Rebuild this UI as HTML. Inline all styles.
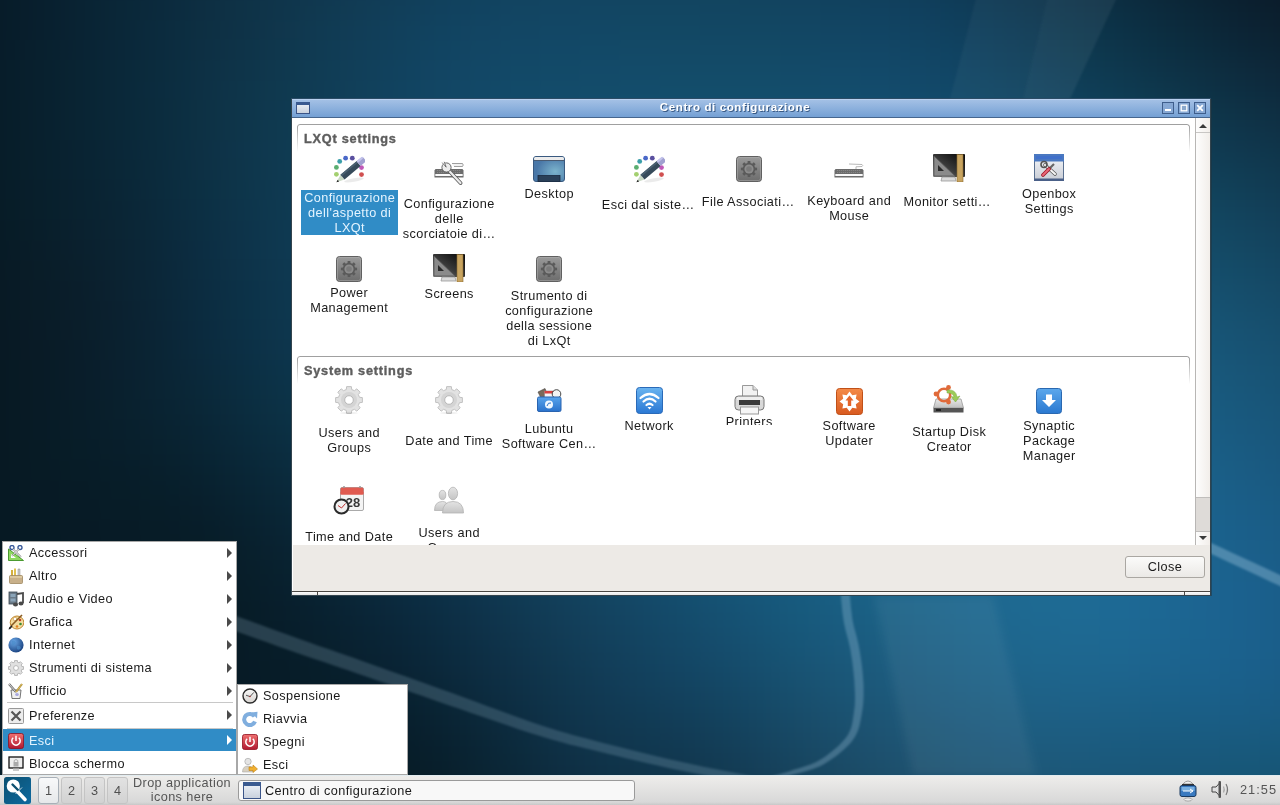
<!DOCTYPE html>
<html><head><meta charset="utf-8"><style>
html,body{margin:0;padding:0;width:1280px;height:805px;overflow:hidden;position:relative;font-family:"Liberation Sans", sans-serif}
</style></head><body><div style="position:absolute;left:0;top:0;width:1280px;height:805px;overflow:hidden;will-change:transform">
<div style="position:absolute;left:-40px;top:-40px;width:1360px;filter:blur(12px)"><div style="height:20px;background:linear-gradient(90deg,#061825 0px,#071b29 40px,#081e2d 80px,#092232 120px,#0a2537 160px,#0b293b 200px,#0d2c40 240px,#0e3044 280px,#0f3349 320px,#10364e 360px,#103952 400px,#113c57 440px,#113e5a 480px,#11405c 520px,#11415e 560px,#11425e 600px,#12425e 640px,#12425e 680px,#11425d 720px,#11425d 760px,#11415c 800px,#11405b 840px,#103e5a 880px,#103d59 920px,#0f3b57 960px,#0f3853 1000px,#0e354e 1040px,#0d3149 1080px,#0c2e43 1120px,#0b293c 1160px,#0b2536 1200px,#0b2030 1240px,#0a1c2b 1280px,#0a1927 1320px,#0a1624 1360px)"></div><div style="height:20px;background:linear-gradient(90deg,#061925 0px,#071b29 40px,#081f2d 80px,#092232 120px,#0a2637 160px,#0b2a3c 200px,#0d2d41 240px,#0e3145 280px,#0f344a 320px,#10374f 360px,#113b54 400px,#113d58 440px,#11405c 480px,#11425f 520px,#124360 560px,#124461 600px,#124461 640px,#124460 680px,#124460 720px,#12445f 760px,#12435e 800px,#11425e 840px,#11415d 880px,#103f5c 920px,#103d5a 960px,#0f3b56 1000px,#0e3852 1040px,#0d344c 1080px,#0c3046 1120px,#0c2c40 1160px,#0b2839 1200px,#0b2333 1240px,#0b1f2e 1280px,#0b1b2a 1320px,#0b1927 1360px)"></div><div style="height:20px;background:linear-gradient(90deg,#061925 0px,#071c29 40px,#081f2e 80px,#092333 120px,#0a2738 160px,#0b2a3d 200px,#0d2e42 240px,#0e3246 280px,#0f354b 320px,#103950 360px,#113c55 400px,#113f5a 440px,#11415e 480px,#114361 520px,#124562 560px,#124563 600px,#124663 640px,#124662 680px,#124662 720px,#124561 760px,#124561 800px,#124461 840px,#114360 880px,#114260 920px,#10405e 960px,#0f3d5a 1000px,#0f3a55 1040px,#0e374f 1080px,#0d3349 1120px,#0c2f43 1160px,#0c2a3d 1200px,#0b2637 1240px,#0b2131 1280px,#0b1e2d 1320px,#0b1b2a 1360px)"></div><div style="height:20px;background:linear-gradient(90deg,#061925 0px,#071c29 40px,#081f2e 80px,#092333 120px,#0a2738 160px,#0b2b3e 200px,#0d2f42 240px,#0e3247 280px,#10364c 320px,#103a52 360px,#113d57 400px,#11405c 440px,#114360 480px,#124563 520px,#124664 560px,#124765 600px,#124765 640px,#124864 680px,#124864 720px,#124764 760px,#124763 800px,#124663 840px,#124563 880px,#114463 920px,#114261 960px,#10405d 1000px,#0f3d59 1040px,#0e3953 1080px,#0d364d 1120px,#0c3247 1160px,#0c2d40 1200px,#0c293a 1240px,#0c2435 1280px,#0c2130 1320px,#0c1e2d 1360px)"></div><div style="height:20px;background:linear-gradient(90deg,#061925 0px,#071c2a 40px,#08202e 80px,#092333 120px,#0a2739 160px,#0b2b3e 200px,#0d2f43 240px,#0e3348 280px,#0f374d 320px,#103b53 360px,#113e58 400px,#11415d 440px,#114462 480px,#124664 520px,#124766 560px,#124867 600px,#124967 640px,#134967 680px,#134966 720px,#134966 760px,#134966 800px,#124866 840px,#124766 880px,#124666 920px,#114564 960px,#104261 1000px,#103f5c 1040px,#0f3c56 1080px,#0e3950 1120px,#0d354a 1160px,#0c3044 1200px,#0c2c3e 1240px,#0c2739 1280px,#0c2434 1320px,#0c2131 1360px)"></div><div style="height:20px;background:linear-gradient(90deg,#061a25 0px,#071d2a 40px,#08202e 80px,#092433 120px,#0a2839 160px,#0b2c3e 200px,#0d3044 240px,#0e3449 280px,#0f384e 320px,#103c54 360px,#113f59 400px,#11425f 440px,#124563 480px,#124766 520px,#124967 560px,#124a68 600px,#134a69 640px,#134b69 680px,#134b68 720px,#134b68 760px,#134b68 800px,#134a68 840px,#134a69 880px,#124969 920px,#124767 960px,#114564 1000px,#10425f 1040px,#0f3f5a 1080px,#0e3c54 1120px,#0e384e 1160px,#0d3348 1200px,#0d2f42 1240px,#0d2b3d 1280px,#0d2739 1320px,#0d2435 1360px)"></div><div style="height:20px;background:linear-gradient(90deg,#061a25 0px,#071d2a 40px,#08202e 80px,#092433 120px,#0a2839 160px,#0b2c3f 200px,#0d3044 240px,#0e354a 280px,#0f394f 320px,#103c55 360px,#11405a 400px,#114360 440px,#124664 480px,#124867 520px,#124a69 560px,#134b6a 600px,#134c6a 640px,#134c6b 680px,#134d6b 720px,#134d6b 760px,#134d6b 800px,#134c6b 840px,#134c6c 880px,#134b6c 920px,#12496a 960px,#114767 1000px,#114563 1040px,#10425d 1080px,#0f3e58 1120px,#0e3b52 1160px,#0e374c 1200px,#0d3246 1240px,#0d2e41 1280px,#0d2a3d 1320px,#0d2739 1360px)"></div><div style="height:20px;background:linear-gradient(90deg,#061a25 0px,#071d29 40px,#08202e 80px,#092433 120px,#0a2839 160px,#0b2c3e 200px,#0d3144 240px,#0e354a 280px,#0f3950 320px,#103d56 360px,#11405b 400px,#114460 440px,#124765 480px,#124968 520px,#124b6a 560px,#134c6b 600px,#134d6c 640px,#134e6d 680px,#134e6d 720px,#144e6d 760px,#144e6d 800px,#134e6e 840px,#134e6e 880px,#134d6e 920px,#134c6d 960px,#124a6a 1000px,#114766 1040px,#104461 1080px,#10415c 1120px,#0f3e56 1160px,#0e3a50 1200px,#0e364b 1240px,#0e3246 1280px,#0e2e41 1320px,#0e2b3d 1360px)"></div><div style="height:20px;background:linear-gradient(90deg,#061a25 0px,#071d29 40px,#08202e 80px,#092433 120px,#0a2838 160px,#0b2c3e 200px,#0d3144 240px,#0e354a 280px,#0f3a50 320px,#103d56 360px,#11415c 400px,#114461 440px,#124765 480px,#124969 520px,#134b6b 560px,#134d6c 600px,#134e6e 640px,#144f6e 680px,#14506f 720px,#14506f 760px,#145070 800px,#145070 840px,#145071 880px,#134f71 920px,#134e6f 960px,#124c6d 1000px,#124a69 1040px,#114764 1080px,#10445f 1120px,#10415a 1160px,#0f3d54 1200px,#0f394f 1240px,#0f354a 1280px,#0f3146 1320px,#0f2e42 1360px)"></div><div style="height:20px;background:linear-gradient(90deg,#061a25 0px,#071d29 40px,#08202d 80px,#092332 120px,#0a2738 160px,#0b2c3e 200px,#0d3044 240px,#0e354b 280px,#0f3a51 320px,#103e57 360px,#11415c 400px,#114561 440px,#124866 480px,#124a69 520px,#134c6c 560px,#134e6e 600px,#134f6f 640px,#145070 680px,#145171 720px,#145272 760px,#145272 800px,#145273 840px,#145273 880px,#145173 920px,#135072 960px,#134e6f 1000px,#124c6c 1040px,#124a68 1080px,#114763 1120px,#11445e 1160px,#104059 1200px,#103c53 1240px,#10384f 1280px,#0f354a 1320px,#0f3146 1360px)"></div><div style="height:20px;background:linear-gradient(90deg,#061a25 0px,#071d28 40px,#08202d 80px,#092332 120px,#0a2737 160px,#0b2b3d 200px,#0d3044 240px,#0e354a 280px,#0f3a51 320px,#103e57 360px,#10415c 400px,#114562 440px,#124866 480px,#124a6a 520px,#134d6c 560px,#134e6f 600px,#145070 640px,#145172 680px,#145273 720px,#145374 760px,#145474 800px,#145475 840px,#145476 880px,#145375 920px,#145274 960px,#135172 1000px,#134f6f 1040px,#124c6b 1080px,#124a67 1120px,#114662 1160px,#11435d 1200px,#113f58 1240px,#103c53 1280px,#10384e 1320px,#10344a 1360px)"></div><div style="height:20px;background:linear-gradient(90deg,#061a24 0px,#071c28 40px,#081f2c 80px,#092231 120px,#0a2636 160px,#0b2b3d 200px,#0c3043 240px,#0d354a 280px,#0f3951 320px,#0f3d57 360px,#10415c 400px,#114562 440px,#124866 480px,#124b6a 520px,#134d6d 560px,#134f6f 600px,#145171 640px,#145273 680px,#145374 720px,#155475 760px,#155577 800px,#155577 840px,#155578 880px,#155578 920px,#145477 960px,#145375 1000px,#145172 1040px,#134f6e 1080px,#134c6a 1120px,#124965 1160px,#124661 1200px,#11435c 1240px,#113f57 1280px,#113b53 1320px,#11384e 1360px)"></div><div style="height:20px;background:linear-gradient(90deg,#061924 0px,#071c27 40px,#081f2b 80px,#092230 120px,#0a2535 160px,#0b2a3c 200px,#0c2f43 240px,#0d344a 280px,#0e3950 320px,#0f3d57 360px,#10415c 400px,#114562 440px,#124866 480px,#124b6a 520px,#134d6d 560px,#135070 600px,#145172 640px,#145374 680px,#155476 720px,#155677 760px,#155678 800px,#15577a 840px,#15577a 880px,#15577a 920px,#155679 960px,#155578 1000px,#145475 1040px,#145172 1080px,#134f6e 1120px,#134c69 1160px,#134965 1200px,#124660 1240px,#12425b 1280px,#123e57 1320px,#113b52 1360px)"></div><div style="height:20px;background:linear-gradient(90deg,#061923 0px,#071b26 40px,#081e2a 80px,#0a212f 120px,#0b2534 160px,#0b293b 200px,#0c2e42 240px,#0d3349 280px,#0e3850 320px,#0f3d56 360px,#10415c 400px,#114561 440px,#114866 480px,#124b6a 520px,#134e6d 560px,#135070 600px,#145273 640px,#145475 680px,#155577 720px,#155779 760px,#15587a 800px,#15587b 840px,#16597c 880px,#15597c 920px,#15587c 960px,#15577a 1000px,#155678 1040px,#145475 1080px,#145271 1120px,#144f6d 1160px,#134c69 1200px,#134964 1240px,#134560 1280px,#13415b 1320px,#123e56 1360px)"></div><div style="height:20px;background:linear-gradient(90deg,#071923 0px,#071b26 40px,#091d29 80px,#0a202e 120px,#0b2433 160px,#0b283a 200px,#0c2d42 240px,#0d3349 280px,#0e3850 320px,#0f3c56 360px,#10415c 400px,#114461 440px,#114866 480px,#124b6a 520px,#134e6d 560px,#135071 600px,#145274 640px,#145476 680px,#155678 720px,#15587a 760px,#16597c 800px,#165a7d 840px,#165a7e 880px,#165a7e 920px,#165a7e 960px,#16597d 1000px,#15587b 1040px,#155678 1080px,#155474 1120px,#155170 1160px,#144f6c 1200px,#144b68 1240px,#144863 1280px,#13445f 1320px,#13405a 1360px)"></div><div style="height:20px;background:linear-gradient(90deg,#071922 0px,#081a25 40px,#091d28 80px,#0a1f2c 120px,#0b2332 160px,#0b2739 200px,#0c2d41 240px,#0d3248 280px,#0e374f 320px,#0f3c55 360px,#10405b 400px,#104460 440px,#114765 480px,#124b69 520px,#134e6d 560px,#135071 600px,#145374 640px,#155577 680px,#155779 720px,#15597b 760px,#165a7d 800px,#165b7f 840px,#165c80 880px,#165c80 920px,#165c80 960px,#165b7f 1000px,#165a7d 1040px,#16587b 1080px,#165678 1120px,#155474 1160px,#155170 1200px,#154e6c 1240px,#144b67 1280px,#144763 1320px,#14435e 1360px)"></div><div style="height:20px;background:linear-gradient(90deg,#071822 0px,#081a25 40px,#091c28 80px,#0a1e2b 120px,#0b2231 160px,#0b2738 200px,#0c2c40 240px,#0c3147 280px,#0d364e 320px,#0e3b54 360px,#0f3f5a 400px,#104360 440px,#114764 480px,#124a69 520px,#134d6d 560px,#145071 600px,#145374 640px,#155577 680px,#15577a 720px,#16597d 760px,#165b7f 800px,#165c80 840px,#175d82 880px,#175e82 920px,#175e82 960px,#175d82 1000px,#175c80 1040px,#165b7e 1080px,#16597b 1120px,#165677 1160px,#165373 1200px,#16506f 1240px,#154d6b 1280px,#154966 1320px,#144662 1360px)"></div><div style="height:20px;background:linear-gradient(90deg,#071822 0px,#081a24 40px,#091c27 80px,#0a1e2b 120px,#0b2130 160px,#0b2637 200px,#0b2b3f 240px,#0c3146 280px,#0d364d 320px,#0e3a53 360px,#0f3f59 400px,#10435f 440px,#114664 480px,#124a68 520px,#134d6d 560px,#145071 600px,#145374 640px,#155578 680px,#15587b 720px,#165a7d 760px,#165c80 800px,#175d82 840px,#175e83 880px,#175f84 920px,#175f84 960px,#175f84 1000px,#175e82 1040px,#175d80 1080px,#175b7e 1120px,#17587a 1160px,#175677 1200px,#165373 1240px,#164f6e 1280px,#154c6a 1320px,#154865 1360px)"></div><div style="height:20px;background:linear-gradient(90deg,#071821 0px,#081924 40px,#091b27 80px,#0a1e2a 120px,#0a2130 160px,#0b2536 200px,#0b2a3e 240px,#0c3045 280px,#0d354c 320px,#0e3a52 360px,#0f3e58 400px,#10425d 440px,#114663 480px,#124967 520px,#134c6c 560px,#145070 600px,#145374 640px,#155678 680px,#15587b 720px,#165a7e 760px,#165c81 800px,#175e83 840px,#175f85 880px,#176086 920px,#186186 960px,#186086 1000px,#186085 1040px,#185f83 1080px,#185d80 1120px,#175b7d 1160px,#17587a 1200px,#175576 1240px,#175272 1280px,#164e6d 1320px,#154a68 1360px)"></div><div style="height:20px;background:linear-gradient(90deg,#071821 0px,#081924 40px,#091b26 80px,#091d2a 120px,#0a212f 160px,#0a2535 200px,#0b2a3d 240px,#0c2f44 280px,#0d344b 320px,#0e3951 360px,#0f3d57 400px,#10415c 440px,#114561 480px,#124866 520px,#134c6b 560px,#144f70 600px,#145274 640px,#155578 680px,#16587b 720px,#165b7f 760px,#175d82 800px,#175f84 840px,#176086 880px,#186187 920px,#186288 960px,#186288 1000px,#186187 1040px,#186086 1080px,#185f83 1120px,#185c80 1160px,#185a7d 1200px,#175779 1240px,#175375 1280px,#175070 1320px,#164c6c 1360px)"></div><div style="height:20px;background:linear-gradient(90deg,#071821 0px,#071923 40px,#081b26 80px,#091d2a 120px,#0a202f 160px,#0a2434 200px,#0b293b 240px,#0b2e42 280px,#0c3349 320px,#0d384f 360px,#0e3c55 400px,#10405b 440px,#114460 480px,#124765 520px,#134b6a 560px,#134f6f 600px,#145273 640px,#155578 680px,#16587c 720px,#165b7f 760px,#175d82 800px,#176085 840px,#186187 880px,#186289 920px,#18638a 960px,#19638a 1000px,#196389 1040px,#196288 1080px,#196086 1120px,#195e83 1160px,#185c80 1200px,#18597c 1240px,#185577 1280px,#175273 1320px,#164e6f 1360px)"></div><div style="height:20px;background:linear-gradient(90deg,#071821 0px,#071923 40px,#081b26 80px,#091d2a 120px,#09202e 160px,#0a2433 200px,#0a2839 240px,#0b2d40 280px,#0c3247 320px,#0d364d 360px,#0e3a53 400px,#0f3e59 440px,#10425e 480px,#114664 520px,#134a69 560px,#134e6e 600px,#145173 640px,#155577 680px,#16587b 720px,#165b7f 760px,#175e83 800px,#176086 840px,#186288 880px,#18638a 920px,#19648b 960px,#19658b 1000px,#19648b 1040px,#19648a 1080px,#196288 1120px,#196086 1160px,#195d82 1200px,#195a7e 1240px,#18577a 1280px,#175376 1320px,#174f71 1360px)"></div><div style="height:20px;background:linear-gradient(90deg,#071821 0px,#071923 40px,#081b26 80px,#081d29 120px,#09202d 160px,#092332 200px,#0a2737 240px,#0b2c3e 280px,#0c3145 320px,#0d354b 360px,#0e3951 400px,#0f3d57 440px,#10415d 480px,#114562 520px,#124968 560px,#134d6d 600px,#145172 640px,#155477 680px,#16587b 720px,#165b7f 760px,#175e83 800px,#186086 840px,#186289 880px,#19648b 920px,#19658c 960px,#1a668d 1000px,#1a668d 1040px,#1a658c 1080px,#1a648a 1120px,#1a6288 1160px,#195f85 1200px,#195c81 1240px,#18587d 1280px,#185578 1320px,#175174 1360px)"></div><div style="height:20px;background:linear-gradient(90deg,#061821 0px,#071923 40px,#071b26 80px,#081d29 120px,#081f2c 160px,#092230 200px,#092535 240px,#0a2a3c 280px,#0b2f42 320px,#0c3349 360px,#0e374f 400px,#0f3b55 440px,#103f5b 480px,#114460 520px,#124866 560px,#134c6c 600px,#145071 640px,#155476 680px,#16577b 720px,#165b7f 760px,#175e83 800px,#186186 840px,#186389 880px,#19658c 920px,#1a668d 960px,#1a678e 1000px,#1a678f 1040px,#1b668e 1080px,#1b658d 1120px,#1a638a 1160px,#1a6087 1200px,#195d83 1240px,#19597f 1280px,#18567b 1320px,#185276 1360px)"></div><div style="height:20px;background:linear-gradient(90deg,#061821 0px,#071923 40px,#071b25 80px,#071d28 120px,#081e2b 160px,#08212e 200px,#092433 240px,#0a2839 280px,#0b2d3f 320px,#0c3146 360px,#0d354c 400px,#0e3952 440px,#103e58 480px,#11425f 520px,#124764 560px,#134b6a 600px,#144f70 640px,#155375 680px,#16577a 720px,#165a7e 760px,#175e83 800px,#186186 840px,#196389 880px,#19658c 920px,#1a678e 960px,#1b688f 1000px,#1b6890 1040px,#1b6890 1080px,#1b668f 1120px,#1b648c 1160px,#1a6289 1200px,#1a5e86 1240px,#195b81 1280px,#19577d 1320px,#185479 1360px)"></div><div style="height:20px;background:linear-gradient(90deg,#061821 0px,#071923 40px,#071b25 80px,#071c27 120px,#071d29 160px,#081f2c 200px,#082230 240px,#092636 280px,#0a2a3c 320px,#0c2f43 360px,#0d3349 400px,#0e3850 440px,#0f3c56 480px,#11415c 520px,#124563 560px,#134a69 600px,#144e6e 640px,#155274 680px,#165679 720px,#165a7e 760px,#175d82 800px,#186086 840px,#196389 880px,#1a658c 920px,#1a678f 960px,#1b6890 1000px,#1b6991 1040px,#1c6991 1080px,#1b6890 1120px,#1b668e 1160px,#1b638c 1200px,#1a6088 1240px,#1a5c84 1280px,#19587f 1320px,#18557b 1360px)"></div><div style="height:20px;background:linear-gradient(90deg,#061822 0px,#061923 40px,#071a25 80px,#071b26 120px,#071d28 160px,#071e2a 200px,#08202d 240px,#092433 280px,#0a2839 320px,#0b2d40 360px,#0c3146 400px,#0e364d 440px,#0f3a54 480px,#113f5a 520px,#124461 560px,#134867 600px,#144d6d 640px,#155172 680px,#165578 720px,#16597d 760px,#175d82 800px,#186086 840px,#196389 880px,#1a658c 920px,#1b678f 960px,#1b6991 1000px,#1c6992 1040px,#1c6992 1080px,#1c6992 1120px,#1c6790 1160px,#1b648d 1200px,#1b618a 1240px,#1a5d86 1280px,#195a82 1320px,#18567d 1360px)"></div><div style="height:20px;background:linear-gradient(90deg,#061822 0px,#061923 40px,#061a24 80px,#071b26 120px,#071c27 160px,#071d28 200px,#081e2b 240px,#082230 280px,#092636 320px,#0b2a3d 360px,#0c2f44 400px,#0d344a 440px,#0f3851 480px,#103d58 520px,#12425e 560px,#134765 600px,#144b6b 640px,#155071 680px,#155476 720px,#16587c 760px,#175c81 800px,#186085 840px,#196389 880px,#1a658c 920px,#1b678f 960px,#1c6991 1000px,#1c6a93 1040px,#1c6a93 1080px,#1c6a93 1120px,#1c6892 1160px,#1c658f 1200px,#1b628c 1240px,#1a5e88 1280px,#195b84 1320px,#19577f 1360px)"></div><div style="height:20px;background:linear-gradient(90deg,#061822 0px,#061923 40px,#061a24 80px,#071a25 120px,#071b26 160px,#071c27 200px,#071d29 240px,#08202d 280px,#092433 320px,#0a283a 360px,#0b2d41 400px,#0d3248 440px,#0e364f 480px,#103b56 520px,#12405c 560px,#134563 600px,#144a69 640px,#154e6f 680px,#155375 720px,#16577a 760px,#175b7f 800px,#185f84 840px,#196288 880px,#1a658b 920px,#1b678e 960px,#1c6991 1000px,#1d6a93 1040px,#1d6b94 1080px,#1d6a94 1120px,#1c6993 1160px,#1c6691 1200px,#1b638e 1240px,#1a5f8a 1280px,#1a5c86 1320px,#195881 1360px)"></div><div style="height:20px;background:linear-gradient(90deg,#061922 0px,#061923 40px,#061a24 80px,#061a24 120px,#071a25 160px,#071b26 200px,#071c27 240px,#081f2b 280px,#092231 320px,#0a2637 360px,#0b2b3e 400px,#0c2f45 440px,#0e344c 480px,#103953 520px,#113e5a 560px,#134360 600px,#144867 640px,#144d6d 680px,#155173 720px,#165679 760px,#175a7e 800px,#185e83 840px,#196187 880px,#1a648a 920px,#1c678e 960px,#1c6990 1000px,#1d6a93 1040px,#1d6b94 1080px,#1d6b95 1120px,#1d6994 1160px,#1c6792 1200px,#1b648f 1240px,#1b608b 1280px,#1a5d87 1320px,#195983 1360px)"></div><div style="height:20px;background:linear-gradient(90deg,#061923 0px,#061923 40px,#061a24 80px,#061a24 120px,#071a24 160px,#071a25 200px,#071b26 240px,#081e2a 280px,#08212e 320px,#092534 360px,#0a293b 400px,#0c2d42 440px,#0d324a 480px,#0f3751 520px,#113c57 560px,#13425e 600px,#144664 640px,#144b6b 680px,#155071 720px,#165477 760px,#16597c 800px,#185d81 840px,#196085 880px,#1b6389 920px,#1c668d 960px,#1d6890 1000px,#1d6a92 1040px,#1e6b94 1080px,#1d6b95 1120px,#1d6a94 1160px,#1c6793 1200px,#1c6490 1240px,#1b618d 1280px,#1a5d89 1320px,#195a84 1360px)"></div><div style="height:20px;background:linear-gradient(90deg,#061923 0px,#061a24 40px,#061a24 80px,#061a24 120px,#061a24 160px,#071a25 200px,#071b26 240px,#071d28 280px,#081f2d 320px,#092332 360px,#0a2739 400px,#0b2b40 440px,#0d3047 480px,#0f354e 520px,#113b55 560px,#12405b 600px,#134562 640px,#144968 680px,#154e6f 720px,#155375 760px,#16577a 800px,#185b7f 840px,#195f83 880px,#1b6288 920px,#1c658b 960px,#1d678e 1000px,#1e6991 1040px,#1e6a93 1080px,#1e6b95 1120px,#1d6a94 1160px,#1c6793 1200px,#1c6491 1240px,#1b618e 1280px,#1a5e8a 1320px,#195b85 1360px)"></div><div style="height:20px;background:linear-gradient(90deg,#061923 0px,#061a24 40px,#061a24 80px,#061a25 120px,#071a25 160px,#071a25 200px,#071b25 240px,#071c27 280px,#081e2b 320px,#082130 360px,#0a2536 400px,#0b293d 440px,#0c2e44 480px,#0e334b 520px,#103952 560px,#123e59 600px,#13435f 640px,#144766 680px,#144c6c 720px,#155172 760px,#165578 800px,#175a7d 840px,#195d81 880px,#1b6185 920px,#1c6489 960px,#1d668d 1000px,#1e6890 1040px,#1e6a92 1080px,#1e6a94 1120px,#1d6994 1160px,#1c6793 1200px,#1c6491 1240px,#1b618e 1280px,#1a5e8a 1320px,#195b85 1360px)"></div><div style="height:20px;background:linear-gradient(90deg,#061a24 0px,#061a25 40px,#071a25 80px,#071a25 120px,#071a25 160px,#071a25 200px,#071b25 240px,#071c27 280px,#071d2a 320px,#08202e 360px,#092334 400px,#0a273a 440px,#0c2c41 480px,#0e3148 520px,#10374f 560px,#123c56 600px,#13415d 640px,#134563 680px,#144a69 720px,#154e6f 760px,#165375 800px,#17587a 840px,#195b7f 880px,#1b5f83 920px,#1d6287 960px,#1e658b 1000px,#1e678e 1040px,#1e6891 1080px,#1e6992 1120px,#1d6893 1160px,#1c6692 1200px,#1b6490 1240px,#1b618e 1280px,#1a5e8a 1320px,#195b86 1360px)"></div><div style="height:20px;background:linear-gradient(90deg,#061a25 0px,#071b25 40px,#071b26 80px,#071b26 120px,#071b25 160px,#071b25 200px,#071b25 240px,#071b26 280px,#071d29 320px,#081f2c 360px,#092231 400px,#0a2537 440px,#0b2a3e 480px,#0d2f45 520px,#0f344c 560px,#113a53 600px,#123f5a 640px,#134360 680px,#144766 720px,#154c6c 760px,#165171 800px,#175577 840px,#1a597c 880px,#1c5d80 920px,#1d6085 960px,#1e6388 1000px,#1e658c 1040px,#1e678e 1080px,#1e6790 1120px,#1d6790 1160px,#1c6590 1200px,#1b638f 1240px,#1b618d 1280px,#1a5e8a 1320px,#195b85 1360px)"></div><div style="height:20px;background:linear-gradient(90deg,#071b25 0px,#071b26 40px,#071b26 80px,#071b26 120px,#071b26 160px,#071b26 200px,#071b26 240px,#071b26 280px,#071c28 320px,#071e2a 360px,#08202f 400px,#092334 440px,#0b283b 480px,#0d2d42 520px,#0f3249 560px,#103850 600px,#123c57 640px,#12415d 680px,#134563 720px,#144968 760px,#164e6e 800px,#185373 840px,#1a5778 880px,#1c5b7d 920px,#1d5e82 960px,#1e6186 1000px,#1e6389 1040px,#1e658c 1080px,#1d658d 1120px,#1d658e 1160px,#1c638d 1200px,#1b628d 1240px,#1a608c 1280px,#1a5d88 1320px,#195b84 1360px)"></div><div style="height:20px;background:linear-gradient(90deg,#071b26 0px,#071b27 40px,#071c27 80px,#071c27 120px,#071c27 160px,#071b26 200px,#071b26 240px,#071b26 280px,#071b27 320px,#071d29 360px,#081f2c 400px,#092231 440px,#0a2637 480px,#0c2b3f 520px,#0e3046 560px,#10364d 600px,#113a54 640px,#123e5a 680px,#13425f 720px,#144664 760px,#154b6a 800px,#18506f 840px,#1a5475 880px,#1c587a 920px,#1e5c7e 960px,#1e5f83 1000px,#1e6186 1040px,#1e6288 1080px,#1d638a 1120px,#1c628a 1160px,#1b618a 1200px,#1a608a 1240px,#1a5f89 1280px,#195c86 1320px,#185a82 1360px)"></div><div style="height:20px;background:linear-gradient(90deg,#071b26 0px,#071c27 40px,#071c28 80px,#071c28 120px,#071c28 160px,#071c27 200px,#071b26 240px,#071b26 280px,#071b26 320px,#071c27 360px,#071d2a 400px,#08202e 440px,#092434 480px,#0b293b 520px,#0d2e43 560px,#0f344b 600px,#113851 640px,#113c56 680px,#123f5a 720px,#13435f 760px,#154865 800px,#184d6b 840px,#1a5271 880px,#1c5676 920px,#1e5a7b 960px,#1e5c7f 1000px,#1e5f82 1040px,#1e6085 1080px,#1d6086 1120px,#1c6086 1160px,#1a5f86 1200px,#1a5e86 1240px,#195d86 1280px,#195b83 1320px,#185980 1360px)"></div><div style="height:20px;background:linear-gradient(90deg,#071c27 0px,#071c28 40px,#071d28 80px,#071d29 120px,#071d29 160px,#071c28 200px,#071c27 240px,#071b26 280px,#071b25 320px,#071b26 360px,#071c28 400px,#081e2b 440px,#092231 480px,#0b2738 520px,#0d2c40 560px,#0f3248 600px,#10364e 640px,#113952 680px,#123c56 720px,#13405b 760px,#154561 800px,#184a67 840px,#1a4f6d 880px,#1d5373 920px,#1e5777 960px,#1e5a7b 1000px,#1e5c7f 1040px,#1d5d81 1080px,#1c5d82 1120px,#1b5d82 1160px,#1a5c82 1200px,#195c82 1240px,#195b81 1280px,#185a7f 1320px,#18587d 1360px)"></div><div style="height:20px;background:linear-gradient(90deg,#071c28 0px,#071d28 40px,#071d29 80px,#071d29 120px,#071d29 160px,#071d29 200px,#071c27 240px,#071b26 280px,#061a25 320px,#061a25 360px,#071b26 400px,#071d29 440px,#08202e 480px,#0a2535 520px,#0c2b3d 560px,#0e3045 600px,#10344b 640px,#10374f 680px,#113952 720px,#133d56 760px,#15425d 800px,#174763 840px,#1a4c69 880px,#1d516f 920px,#1e5574 960px,#1e5778 1000px,#1e597b 1040px,#1d5b7d 1080px,#1c5b7e 1120px,#1a5a7e 1160px,#19597d 1200px,#19597d 1240px,#18597c 1280px,#17587b 1320px,#175679 1360px)"></div><div style="height:20px;background:linear-gradient(90deg,#071d28 0px,#071d29 40px,#081e2a 80px,#081e2a 120px,#081e2a 160px,#071d29 200px,#071c27 240px,#071b25 280px,#061a24 320px,#061a24 360px,#061a25 400px,#071c27 440px,#081f2b 480px,#0a2433 520px,#0c293a 560px,#0e2e42 600px,#0f3248 640px,#10354b 680px,#11374e 720px,#123a52 760px,#153f59 800px,#17455f 840px,#1a4a65 880px,#1c4e6b 920px,#1e5270 960px,#1e5574 1000px,#1e5777 1040px,#1d5879 1080px,#1b587a 1120px,#1a587a 1160px,#195779 1200px,#185779 1240px,#175778 1280px,#175677 1320px,#175576 1360px)"></div><div style="height:20px;background:linear-gradient(90deg,#071d28 0px,#071d29 40px,#081e2a 80px,#081e2a 120px,#081e2a 160px,#071d29 200px,#071c27 240px,#071b25 280px,#061a24 320px,#061923 360px,#061a24 400px,#071b25 440px,#081e2a 480px,#0a2230 520px,#0c2738 560px,#0d2c3f 600px,#0f3044 640px,#103348 680px,#11354b 720px,#12384f 760px,#143d55 800px,#17425b 840px,#1a4762 880px,#1c4c67 920px,#1d4f6c 960px,#1e5270 1000px,#1d5473 1040px,#1c5575 1080px,#1b5676 1120px,#1a5576 1160px,#185575 1200px,#185575 1240px,#175574 1280px,#175473 1320px,#165373 1360px)"></div><div style="height:20px;background:linear-gradient(90deg,#071d28 0px,#071e29 40px,#081e2a 80px,#081e2a 120px,#081e2a 160px,#071d29 200px,#071c27 240px,#071b25 280px,#061a23 320px,#061923 360px,#061923 400px,#071b25 440px,#081d29 480px,#09212e 520px,#0b2635 560px,#0d2a3c 600px,#0e2e41 640px,#0f3145 680px,#103348 720px,#12374c 760px,#143b52 800px,#174058 840px,#19455e 880px,#1c4963 920px,#1d4d68 960px,#1d506c 1000px,#1d526f 1040px,#1c5371 1080px,#1b5372 1120px,#195372 1160px,#185372 1200px,#175371 1240px,#175371 1280px,#165370 1320px,#165270 1360px)"></div><div style="height:20px;background:linear-gradient(90deg,#071d28 0px,#081e29 40px,#081e2a 80px,#081e2a 120px,#081e2a 160px,#071d29 200px,#071c27 240px,#071b25 280px,#061a23 320px,#061922 360px,#061922 400px,#071a24 440px,#081d28 480px,#09202d 520px,#0b2533 560px,#0d2939 600px,#0e2c3e 640px,#0f2f42 680px,#103245 720px,#12354a 760px,#14394f 800px,#173e55 840px,#19435b 880px,#1b4760 920px,#1c4a64 960px,#1c4d68 1000px,#1c4f6b 1040px,#1b506d 1080px,#1a516e 1120px,#19516e 1160px,#18516e 1200px,#17516e 1240px,#16516d 1280px,#16516d 1320px,#16506d 1360px)"></div><div style="height:20px;background:linear-gradient(90deg,#071d28 0px,#081e29 40px,#081e2a 80px,#081e2a 120px,#081e29 160px,#071d28 200px,#071c26 240px,#071b24 280px,#061a23 320px,#061922 360px,#061922 400px,#071a23 440px,#081c27 480px,#09202b 520px,#0b2331 560px,#0c2736 600px,#0e2b3b 640px,#0f2d3f 680px,#103043 720px,#123447 760px,#14384c 800px,#163c52 840px,#194057 880px,#1a445c 920px,#1b4861 960px,#1c4b65 1000px,#1c4d67 1040px,#1b4e69 1080px,#1a4f6a 1120px,#194f6b 1160px,#184f6b 1200px,#17506b 1240px,#16506a 1280px,#16506a 1320px,#154f6a 1360px)"></div></div>
<svg style="position:absolute;left:0;top:0" width="1280" height="805" viewBox="0 0 1280 805">
<defs><filter id="bl1" x="-20%" y="-20%" width="140%" height="140%"><feGaussianBlur stdDeviation="1.3"/></filter>
<filter id="bl3" x="-20%" y="-20%" width="140%" height="140%"><feGaussianBlur stdDeviation="4"/></filter></defs>
<path d="M874,596 L993,596 L1036,775 L913,775Z" fill="#ffffff" fill-opacity="0.05" filter="url(#bl3)"/>
<path d="M977,-5 L1048,-5 L1023,99 L950,99Z" fill="#ffffff" fill-opacity="0.035" filter="url(#bl1)"/>
<path d="M1048,-5 L1118,-5 L1070,99 L1023,99Z" fill="#ffffff" fill-opacity="0.06" filter="url(#bl1)"/>
<path d="M223.5,626.8 L229.4,628.9 L237.2,631.7 L246.5,635.0 L256.8,638.7 L267.6,642.6 L278.4,646.4 L288.6,650.0 L297.7,653.2 L305.7,656.0 L313.0,658.5 L320.0,660.8 L326.8,663.1 L333.7,665.5 L341.0,667.9 L348.9,670.6 L357.8,673.7 L367.6,677.0 L378.2,680.7 L389.4,684.6 L401.0,688.6 L412.8,692.7 L424.7,696.8 L436.4,700.9 L447.9,704.9 L459.4,708.8 L471.2,712.9 L483.1,717.0 L494.9,721.1 L506.6,725.1 L517.8,728.9 L528.5,732.4 L538.4,735.5 L547.3,738.2 L555.2,740.5 L562.5,742.6 L569.3,744.4 L576.1,746.1 L583.1,747.8 L590.6,749.6 L598.8,751.6 L607.8,753.8 L617.3,756.1 L627.0,758.4 L637.1,760.8 L647.4,763.2 L657.8,765.5 L668.4,767.9 L679.1,770.2 L690.5,772.6 L703.1,775.1 L716.2,777.7 L729.2,780.2 L741.6,782.6 L752.8,784.8 L762.2,786.6 L769.2,787.9 L770.8,780.1 L763.8,778.7 L754.4,776.8 L743.2,774.6 L730.8,772.1 L717.8,769.5 L704.7,766.9 L692.2,764.3 L680.9,761.8 L670.3,759.4 L659.8,757.0 L649.4,754.5 L639.2,752.0 L629.2,749.6 L619.5,747.1 L610.1,744.7 L601.2,742.4 L592.9,740.3 L585.5,738.3 L578.6,736.5 L571.9,734.7 L565.2,732.8 L558.1,730.7 L550.3,728.3 L541.6,725.5 L531.9,722.2 L521.4,718.5 L510.3,714.5 L498.8,710.3 L487.0,706.0 L475.2,701.6 L463.5,697.3 L452.1,693.1 L440.6,689.0 L428.9,684.8 L417.1,680.6 L405.3,676.3 L393.7,672.2 L382.6,668.2 L372.0,664.4 L362.2,660.9 L353.4,657.8 L345.4,655.0 L338.1,652.5 L331.2,650.1 L324.4,647.8 L317.5,645.4 L310.3,642.8 L302.3,640.0 L293.3,636.8 L283.1,633.1 L272.4,629.2 L261.7,625.3 L251.4,621.6 L242.1,618.2 L234.3,615.3 L228.5,613.2Z" fill="#a8cce0" fill-opacity="0.2" filter="url(#bl1)"/>
<path d="M840.5,590.4 L840.7,592.7 L841.0,595.7 L841.2,599.4 L841.6,603.5 L842.0,607.9 L842.4,612.3 L843.0,616.6 L843.6,620.7 L844.3,624.6 L845.2,628.5 L846.1,632.2 L847.1,635.9 L848.1,639.6 L849.0,643.3 L849.8,647.0 L850.6,650.8 L851.2,654.8 L851.9,659.0 L852.5,663.3 L853.0,667.7 L853.5,672.0 L853.9,676.2 L854.3,680.3 L854.5,684.2 L854.7,688.0 L854.9,691.6 L855.0,695.0 L855.0,698.4 L854.9,701.7 L854.8,704.9 L854.5,708.1 L854.0,711.4 L853.6,714.8 L853.1,718.1 L852.6,721.3 L852.0,724.3 L851.3,727.3 L850.2,730.2 L848.9,733.1 L847.2,736.0 L844.9,739.0 L842.1,742.1 L838.9,745.4 L835.4,748.5 L831.7,751.6 L828.0,754.6 L824.2,757.3 L820.6,759.6 L817.1,761.6 L813.5,763.3 L809.7,764.7 L805.9,766.0 L802.1,767.2 L798.2,768.4 L794.2,769.6 L790.3,770.9 L786.3,772.2 L781.9,773.5 L777.4,774.8 L773.0,776.1 L768.8,777.4 L765.0,778.4 L761.8,779.4 L759.5,780.1 L760.5,783.9 L762.9,783.3 L766.1,782.4 L769.9,781.4 L774.1,780.2 L778.6,779.0 L783.1,777.7 L787.6,776.4 L791.7,775.1 L795.5,774.0 L799.5,773.0 L803.4,771.9 L807.4,770.8 L811.4,769.6 L815.5,768.1 L819.5,766.4 L823.4,764.4 L827.3,762.0 L831.4,759.3 L835.5,756.4 L839.5,753.3 L843.3,750.1 L846.8,746.8 L850.1,743.4 L852.8,740.0 L855.1,736.6 L856.9,733.1 L858.3,729.6 L859.3,726.2 L860.1,722.7 L860.8,719.3 L861.4,716.0 L862.0,712.6 L862.5,709.2 L863.0,705.7 L863.3,702.2 L863.5,698.6 L863.6,695.0 L863.6,691.4 L863.6,687.6 L863.5,683.8 L863.2,679.7 L862.9,675.4 L862.5,671.0 L862.0,666.6 L861.4,662.1 L860.8,657.7 L860.1,653.4 L859.4,649.2 L858.6,645.1 L857.7,641.2 L856.8,637.3 L855.8,633.6 L854.8,629.9 L853.9,626.4 L853.1,622.8 L852.4,619.3 L851.9,615.4 L851.4,611.3 L850.9,607.0 L850.5,602.7 L850.2,598.7 L849.9,595.0 L849.7,591.9 L849.5,589.6Z" fill="#b4d8ee" fill-opacity="0.26" filter="url(#bl1)"/>
<path d="M1202.9,550.0 L1209.1,552.9 L1217.9,557.0 L1228.4,561.9 L1239.8,567.2 L1251.2,572.6 L1261.9,577.6 L1271.1,581.9 L1277.9,585.0 L1282.3,587.1 L1285.2,588.4 L1286.9,589.2 L1287.8,589.6 L1293.0,588.9 L1292.7,580.9 L1288.1,589.6 L1288.0,589.6 L1292.0,580.4 L1291.3,580.1 L1286.8,588.9 L1286.7,581.1 L1291.6,580.3 L1291.0,580.1 L1289.4,579.3 L1286.5,578.0 L1282.1,576.0 L1275.3,572.8 L1266.2,568.5 L1255.5,563.5 L1244.0,558.2 L1232.6,552.9 L1222.1,548.0 L1213.3,543.9 L1207.1,541.0Z" fill="#c0e0f4" fill-opacity="0.3" filter="url(#bl1)"/>
</svg>
<div style="position:absolute;left:291px;top:98px;width:920px;height:498px;background:#33444e"></div>
<div style="position:absolute;left:291px;top:98px;width:920px;height:1px;background:#2c4c66"></div>
<div style="position:absolute;left:1211px;top:99px;width:1px;height:497px;background:rgba(30,50,60,0.5)"></div>
<div style="position:absolute;left:292px;top:99px;width:918px;height:496px;background:#fff"></div>
<div style="position:absolute;left:292px;top:99px;width:918px;height:18px;background:linear-gradient(#a6c2e6,#74a0d4)"></div>
<div style="position:absolute;left:292px;top:99px;width:918px;height:1px;background:#b8d0f0"></div>
<div style="position:absolute;left:292px;top:117px;width:918px;height:1px;background:#46668e"></div>
<svg style="position:absolute;left:296px;top:102px" width="14" height="12" viewBox="0 0 14 12"><defs><linearGradient id="wi296" x1="0" y1="0" x2="0" y2="1"><stop offset="0" stop-color="#f0f4fa"/><stop offset="1" stop-color="#c8d0dc"/></linearGradient></defs>
<rect x="0.5" y="0.5" width="13" height="11" fill="url(#wi296)" stroke="#3a5488"/><rect x="0" y="0" width="14" height="3" fill="#3a5a90"/></svg>
<div style="position:absolute;left:610px;top:97.9px;width:250px;text-align:center;font-size:11.6px;letter-spacing:0.58px;font-weight:bold;line-height:18px;color:#fff;text-shadow:1px 1px 0 #3a5a84">Centro di configurazione</div>
<svg style="position:absolute;left:1162px;top:102px" width="12" height="12" viewBox="0 0 12 12"><rect x="0.5" y="0.5" width="11" height="11" fill="#86a8d4" stroke="#3e5e8c"/><rect x="3" y="7" width="6" height="2" fill="#fff"/></svg>
<svg style="position:absolute;left:1178px;top:102px" width="12" height="12" viewBox="0 0 12 12"><rect x="0.5" y="0.5" width="11" height="11" fill="#86a8d4" stroke="#3e5e8c"/><rect x="3.2" y="3.2" width="5.6" height="5.6" fill="#8aa8cc" stroke="#fff" stroke-width="1.3"/></svg>
<svg style="position:absolute;left:1194px;top:102px" width="12" height="12" viewBox="0 0 12 12"><rect x="0.5" y="0.5" width="11" height="11" fill="#86a8d4" stroke="#3e5e8c"/><path d="M3.2,3.2 L8.8,8.8 M8.8,3.2 L3.2,8.8" stroke="#fff" stroke-width="1.8"/></svg>
<div style="position:absolute;left:1195px;top:118px;width:1px;height:427px;background:#b8b6b4"></div>
<div style="position:absolute;left:1196px;top:118px;width:14px;height:427px;background:linear-gradient(90deg,#fdfdfd,#f2eeea)"></div>
<div style="position:absolute;left:1196px;top:132px;width:14px;height:1px;background:#c8c6c4"></div>
<div style="position:absolute;left:1196px;top:497px;width:14px;height:35px;background:#dedbd8;border-top:1px solid #c0bebc;border-bottom:1px solid #c0bebc;box-sizing:border-box"></div>
<svg style="position:absolute;left:1198px;top:122px" width="10" height="8" viewBox="0 0 10 8"><path d="M1,6 L5,2 L9,6Z" fill="#3a3a3a"/></svg>
<svg style="position:absolute;left:1198px;top:534px" width="10" height="8" viewBox="0 0 10 8"><path d="M1,2 L5,6 L9,2Z" fill="#3a3a3a"/></svg>
<div style="position:absolute;left:297px;top:124px;width:893px;height:40px;border:1px solid #a0a0a0;border-bottom:none;border-radius:3px 3px 0 0;-webkit-mask-image:linear-gradient(#000 5%,transparent 70%);box-sizing:border-box"></div>
<div style="position:absolute;left:297px;top:356px;width:893px;height:40px;border:1px solid #a0a0a0;border-bottom:none;border-radius:3px 3px 0 0;-webkit-mask-image:linear-gradient(#000 5%,transparent 70%);box-sizing:border-box"></div>
<div style="position:absolute;left:304px;top:131.3px;font-size:12.7px;letter-spacing:0.78px;font-weight:bold;-webkit-text-stroke:0.4px #5e5e5e;line-height:16px;color:#5e5e5e">LXQt settings</div>
<div style="position:absolute;left:304px;top:363.3px;font-size:12.7px;letter-spacing:0.78px;font-weight:bold;-webkit-text-stroke:0.4px #5e5e5e;line-height:16px;color:#5e5e5e">System settings</div>
<svg style="position:absolute;left:333px;top:152px" width="32" height="32" viewBox="0 0 32 32"><circle cx="3.4" cy="22.3" r="2.4" fill="#a4d070"/><circle cx="3.4" cy="15.4" r="2.4" fill="#5aae70"/><circle cx="6.7" cy="9.4" r="2.4" fill="#3a9ea8"/><circle cx="12.6" cy="6.2" r="2.4" fill="#4a68c8"/><circle cx="19.3" cy="6.2" r="2.4" fill="#5a50a0"/><circle cx="28.5" cy="15.6" r="2.4" fill="#c058b8"/><circle cx="28.5" cy="22.6" r="2.4" fill="#d05050"/><ellipse cx="21" cy="28" rx="10" ry="1.8" fill="#000" fill-opacity="0.08" transform="rotate(-10 21 28)"/>
<g transform="translate(3.4,30.3) rotate(-40.1)">
<path d="M0,0 L8,-3.1 L8,3.1Z" fill="#c8d8c4"/><path d="M0,0 L2.6,-1.1 L2.6,1.1Z" fill="#222"/>
<rect x="8" y="-3.1" width="21" height="6.2" fill="#364a5a"/><rect x="8" y="-3.1" width="21" height="1.8" fill="#4a6070"/>
<rect x="29" y="-3.1" width="7.5" height="6.2" rx="1.5" fill="#a0a0d0"/><rect x="29" y="-3.1" width="7.5" height="2" rx="1" fill="#c4c4ec"/>
</g></svg>
<svg style="position:absolute;left:434px;top:160px" width="31" height="25" viewBox="0 0 31 25"><path d="M1.5,9 L28.5,9 L29.5,10.5 L29.5,14 L0.5,14 L0.5,10.5Z" fill="#6c6c6c"/>
<path d="M3,10.5 L27,10.5 M3,12.5 L27,12.5" stroke="#9a9a9a" stroke-width="0.6" stroke-dasharray="1.2,0.8"/>
<rect x="0.5" y="14" width="29" height="2.2" fill="#fafafa"/><rect x="0.5" y="14" width="0.8" height="2.2" fill="#666"/><rect x="28.7" y="14" width="0.8" height="2.2" fill="#666"/>
<rect x="0.5" y="16.2" width="29" height="1.2" fill="#4a4a4a"/><path d="M18,3.5 L28.5,3.5 Q30,5 28.5,6.5 L20,6.5" fill="#f2f2f2" stroke="#888" stroke-width="0.8"/>
<path d="M12,7.5 L26.5,23" stroke="#5a5a5a" stroke-width="3.8" stroke-linecap="round"/>
<path d="M12,7.5 L26.5,23" stroke="#ececec" stroke-width="2.2" stroke-linecap="round"/>
<circle cx="12.5" cy="7.5" r="4.6" fill="#ececec" stroke="#555" stroke-width="0.9"/><path d="M12.5,7.5 L7,3.5 L9.5,1 Z" fill="#fff" transform="rotate(8 12.5 7.5)"/><path d="M12.2,7.2 L8.2,2.6 M12.2,7.2 L10.2,1.8" stroke="#555" stroke-width="0.8"/></svg>
<svg style="position:absolute;left:533px;top:156px" width="32" height="26" viewBox="0 0 32 26"><defs><radialGradient id="g1" cx="0.7" cy="0.6" r="0.6"><stop offset="0" stop-color="#7cb4cc"/><stop offset="1" stop-color="#4a78a8"/></radialGradient></defs>
<rect x="0.5" y="0.5" width="31" height="25" rx="2.5" fill="url(#g1)" stroke="#3a5a80"/>
<rect x="1" y="1" width="30" height="3.5" rx="1.5" fill="#ececec"/><line x1="1" y1="4.5" x2="31" y2="4.5" stroke="#4a5a70"/>
<rect x="5" y="19.5" width="22" height="6" fill="#2a4058" stroke="#1a2a40" stroke-width="0.8"/></svg>
<svg style="position:absolute;left:633px;top:152px" width="32" height="32" viewBox="0 0 32 32"><circle cx="3.4" cy="22.3" r="2.4" fill="#a4d070"/><circle cx="3.4" cy="15.4" r="2.4" fill="#5aae70"/><circle cx="6.7" cy="9.4" r="2.4" fill="#3a9ea8"/><circle cx="12.6" cy="6.2" r="2.4" fill="#4a68c8"/><circle cx="19.3" cy="6.2" r="2.4" fill="#5a50a0"/><circle cx="28.5" cy="15.6" r="2.4" fill="#c058b8"/><circle cx="28.5" cy="22.6" r="2.4" fill="#d05050"/><ellipse cx="21" cy="28" rx="10" ry="1.8" fill="#000" fill-opacity="0.08" transform="rotate(-10 21 28)"/>
<g transform="translate(3.4,30.3) rotate(-40.1)">
<path d="M0,0 L8,-3.1 L8,3.1Z" fill="#c8d8c4"/><path d="M0,0 L2.6,-1.1 L2.6,1.1Z" fill="#222"/>
<rect x="8" y="-3.1" width="21" height="6.2" fill="#364a5a"/><rect x="8" y="-3.1" width="21" height="1.8" fill="#4a6070"/>
<rect x="29" y="-3.1" width="7.5" height="6.2" rx="1.5" fill="#a0a0d0"/><rect x="29" y="-3.1" width="7.5" height="2" rx="1" fill="#c4c4ec"/>
</g></svg>
<svg style="position:absolute;left:736px;top:156px" width="26" height="26" viewBox="0 0 26 26"><defs><linearGradient id="g2" x1="0" y1="0" x2="0" y2="1"><stop offset="0" stop-color="#9a9a9a"/><stop offset="1" stop-color="#6c6c6c"/></linearGradient></defs>
<rect x="0.5" y="0.5" width="25" height="25" rx="3" fill="url(#g2)" stroke="#606060"/>
<rect x="1.5" y="1.5" width="23" height="23" rx="2" fill="none" stroke="#b0b0b0" stroke-opacity="0.5"/>
<path d="M11.51,6.98 L11.65,4.91 L14.35,4.91 L14.49,6.98 L16.20,7.69 L17.77,6.33 L19.67,8.23 L18.31,9.80 L19.02,11.51 L21.09,11.65 L21.09,14.35 L19.02,14.49 L18.31,16.20 L19.67,17.77 L17.77,19.67 L16.20,18.31 L14.49,19.02 L14.35,21.09 L11.65,21.09 L11.51,19.02 L9.80,18.31 L8.23,19.67 L6.33,17.77 L7.69,16.20 L6.98,14.49 L4.91,14.35 L4.91,11.65 L6.98,11.51 L7.69,9.80 L6.33,8.23 L8.23,6.33 L9.80,7.69Z" fill="#5a5a5a"/>
<circle cx="13" cy="13" r="4.6" fill="#8c8c8c"/><circle cx="13" cy="13" r="2.8" fill="#7a7a7a"/></svg>
<svg style="position:absolute;left:834px;top:160px" width="31" height="18" viewBox="0 0 31 18"><path d="M1.5,9 L28.5,9 L29.5,10.5 L29.5,14 L0.5,14 L0.5,10.5Z" fill="#6c6c6c"/>
<path d="M3,10.5 L27,10.5 M3,12.5 L27,12.5" stroke="#9a9a9a" stroke-width="0.6" stroke-dasharray="1.2,0.8"/>
<rect x="0.5" y="14" width="29" height="2.2" fill="#fafafa"/><rect x="0.5" y="14" width="0.8" height="2.2" fill="#666"/><rect x="28.7" y="14" width="0.8" height="2.2" fill="#666"/>
<rect x="0.5" y="16.2" width="29" height="1.2" fill="#4a4a4a"/><path d="M15,4 L28,4.5 Q29.5,5.5 28,6.5 L22,6.8 L22,9" fill="none" stroke="#b0b0b0" stroke-width="0.9"/></svg>
<svg style="position:absolute;left:933px;top:154px" width="32" height="28" viewBox="0 0 32 28"><defs><linearGradient id="g3" x1="0" y1="1" x2="1" y2="0"><stop offset="0" stop-color="#8a8a8a"/><stop offset="0.45" stop-color="#3a3a3a"/><stop offset="1" stop-color="#050505"/></linearGradient></defs>
<rect x="0" y="0" width="32" height="23" rx="1" fill="url(#g3)"/>
<path d="M1,2 L22,22 L1,22Z" fill="#8a8a8a" stroke="#555" stroke-width="0.8"/>
<path d="M5,11 L11,17 L5,17Z" fill="#2a2a2a"/>
<path d="M9,23 L22,23 L23,27 L8,27Z" fill="#d8d8d8" stroke="#999" stroke-width="0.8"/>
<rect x="24" y="0.5" width="6" height="27.5" fill="#c8a460" stroke="#8a6a30" stroke-width="0.6"/></svg>
<svg style="position:absolute;left:1034px;top:154px" width="30" height="27" viewBox="0 0 30 27"><defs><linearGradient id="g4" x1="0" y1="0" x2="0" y2="1"><stop offset="0" stop-color="#f6f8fc"/><stop offset="1" stop-color="#c8ccd4"/></linearGradient></defs>
<rect x="0.5" y="0.5" width="29" height="26" fill="url(#g4)" stroke="#5a7090"/>
<rect x="0" y="0" width="30" height="7.5" fill="#4a78c0"/><rect x="2" y="2" width="26" height="3" fill="#3a6ad0" fill-opacity="0.6"/>
<rect x="0" y="24.5" width="30" height="2.5" fill="#4a6088"/>
<path d="M11,11 L21,20" stroke="#555" stroke-width="3.6" stroke-linecap="round"/><path d="M11,11 L21,20" stroke="#f4f4f4" stroke-width="2.2" stroke-linecap="round"/>
<circle cx="10" cy="10.5" r="3" fill="none" stroke="#555" stroke-width="1.6"/>
<path d="M20,10 L14,16" stroke="#666" stroke-width="2.2"/>
<path d="M15,15 L9,21" stroke="#a01828" stroke-width="3.8" stroke-linecap="round"/><path d="M15,15 L9,21" stroke="#e86878" stroke-width="2" stroke-linecap="round"/></svg>
<svg style="position:absolute;left:336px;top:256px" width="26" height="26" viewBox="0 0 26 26"><defs><linearGradient id="g5" x1="0" y1="0" x2="0" y2="1"><stop offset="0" stop-color="#9a9a9a"/><stop offset="1" stop-color="#6c6c6c"/></linearGradient></defs>
<rect x="0.5" y="0.5" width="25" height="25" rx="3" fill="url(#g5)" stroke="#606060"/>
<rect x="1.5" y="1.5" width="23" height="23" rx="2" fill="none" stroke="#b0b0b0" stroke-opacity="0.5"/>
<path d="M11.51,6.98 L11.65,4.91 L14.35,4.91 L14.49,6.98 L16.20,7.69 L17.77,6.33 L19.67,8.23 L18.31,9.80 L19.02,11.51 L21.09,11.65 L21.09,14.35 L19.02,14.49 L18.31,16.20 L19.67,17.77 L17.77,19.67 L16.20,18.31 L14.49,19.02 L14.35,21.09 L11.65,21.09 L11.51,19.02 L9.80,18.31 L8.23,19.67 L6.33,17.77 L7.69,16.20 L6.98,14.49 L4.91,14.35 L4.91,11.65 L6.98,11.51 L7.69,9.80 L6.33,8.23 L8.23,6.33 L9.80,7.69Z" fill="#5a5a5a"/>
<circle cx="13" cy="13" r="4.6" fill="#8c8c8c"/><circle cx="13" cy="13" r="2.8" fill="#7a7a7a"/></svg>
<svg style="position:absolute;left:433px;top:254px" width="32" height="28" viewBox="0 0 32 28"><defs><linearGradient id="g6" x1="0" y1="1" x2="1" y2="0"><stop offset="0" stop-color="#8a8a8a"/><stop offset="0.45" stop-color="#3a3a3a"/><stop offset="1" stop-color="#050505"/></linearGradient></defs>
<rect x="0" y="0" width="32" height="23" rx="1" fill="url(#g6)"/>
<path d="M1,2 L22,22 L1,22Z" fill="#8a8a8a" stroke="#555" stroke-width="0.8"/>
<path d="M5,11 L11,17 L5,17Z" fill="#2a2a2a"/>
<path d="M9,23 L22,23 L23,27 L8,27Z" fill="#d8d8d8" stroke="#999" stroke-width="0.8"/>
<rect x="24" y="0.5" width="6" height="27.5" fill="#c8a460" stroke="#8a6a30" stroke-width="0.6"/></svg>
<svg style="position:absolute;left:536px;top:256px" width="26" height="26" viewBox="0 0 26 26"><defs><linearGradient id="g7" x1="0" y1="0" x2="0" y2="1"><stop offset="0" stop-color="#9a9a9a"/><stop offset="1" stop-color="#6c6c6c"/></linearGradient></defs>
<rect x="0.5" y="0.5" width="25" height="25" rx="3" fill="url(#g7)" stroke="#606060"/>
<rect x="1.5" y="1.5" width="23" height="23" rx="2" fill="none" stroke="#b0b0b0" stroke-opacity="0.5"/>
<path d="M11.51,6.98 L11.65,4.91 L14.35,4.91 L14.49,6.98 L16.20,7.69 L17.77,6.33 L19.67,8.23 L18.31,9.80 L19.02,11.51 L21.09,11.65 L21.09,14.35 L19.02,14.49 L18.31,16.20 L19.67,17.77 L17.77,19.67 L16.20,18.31 L14.49,19.02 L14.35,21.09 L11.65,21.09 L11.51,19.02 L9.80,18.31 L8.23,19.67 L6.33,17.77 L7.69,16.20 L6.98,14.49 L4.91,14.35 L4.91,11.65 L6.98,11.51 L7.69,9.80 L6.33,8.23 L8.23,6.33 L9.80,7.69Z" fill="#5a5a5a"/>
<circle cx="13" cy="13" r="4.6" fill="#8c8c8c"/><circle cx="13" cy="13" r="2.8" fill="#7a7a7a"/></svg>
<svg style="position:absolute;left:335px;top:386px" width="28" height="28" viewBox="0 0 28 28"><path d="M11.27,3.55 L11.61,0.61 L16.39,0.61 L16.73,3.55 L19.46,4.68 L21.78,2.84 L25.16,6.22 L23.32,8.54 L24.45,11.27 L27.39,11.61 L27.39,16.39 L24.45,16.73 L23.32,19.46 L25.16,21.78 L21.78,25.16 L19.46,23.32 L16.73,24.45 L16.39,27.39 L11.61,27.39 L11.27,24.45 L8.54,23.32 L6.22,25.16 L2.84,21.78 L4.68,19.46 L3.55,16.73 L0.61,16.39 L0.61,11.61 L3.55,11.27 L4.68,8.54 L2.84,6.22 L6.22,2.84 L8.54,4.68Z" fill="#e2e2e2" stroke="#c2c2c2" stroke-width="1"/>
<circle cx="14" cy="14" r="8" fill="#d4d4d4"/><circle cx="14" cy="14" r="4.3" fill="#fff" stroke="#b8b8b8"/>
<ellipse cx="14" cy="27" rx="9" ry="1.2" fill="#000" fill-opacity="0.06"/></svg>
<svg style="position:absolute;left:435px;top:386px" width="28" height="28" viewBox="0 0 28 28"><path d="M11.27,3.55 L11.61,0.61 L16.39,0.61 L16.73,3.55 L19.46,4.68 L21.78,2.84 L25.16,6.22 L23.32,8.54 L24.45,11.27 L27.39,11.61 L27.39,16.39 L24.45,16.73 L23.32,19.46 L25.16,21.78 L21.78,25.16 L19.46,23.32 L16.73,24.45 L16.39,27.39 L11.61,27.39 L11.27,24.45 L8.54,23.32 L6.22,25.16 L2.84,21.78 L4.68,19.46 L3.55,16.73 L0.61,16.39 L0.61,11.61 L3.55,11.27 L4.68,8.54 L2.84,6.22 L6.22,2.84 L8.54,4.68Z" fill="#e2e2e2" stroke="#c2c2c2" stroke-width="1"/>
<circle cx="14" cy="14" r="8" fill="#d4d4d4"/><circle cx="14" cy="14" r="4.3" fill="#fff" stroke="#b8b8b8"/>
<ellipse cx="14" cy="27" rx="9" ry="1.2" fill="#000" fill-opacity="0.06"/></svg>
<svg style="position:absolute;left:537px;top:388px" width="25" height="24" viewBox="0 0 25 24"><defs><linearGradient id="g8" x1="0" y1="0" x2="0" y2="1"><stop offset="0" stop-color="#58a4ec"/><stop offset="1" stop-color="#2a72cc"/></linearGradient></defs>
<path d="M1,4 L8,0.5 L11,8 L4,10Z" fill="#7a6a5a" stroke="#444" stroke-width="0.6"/>
<rect x="7.5" y="3" width="11" height="7" fill="#f4f4f4" stroke="#888" stroke-width="0.6"/><rect x="7.5" y="3" width="11" height="2.5" fill="#d84040"/>
<circle cx="19.5" cy="6" r="4.3" fill="#f4f4f4" stroke="#333" stroke-width="0.9"/>
<rect x="0.5" y="9" width="23.5" height="14.5" rx="1.5" fill="url(#g8)" stroke="#2a64b0"/>
<circle cx="12" cy="16.5" r="4" fill="#f0f8ff"/><path d="M10,18 Q11,14 14,15" stroke="#2a72cc" stroke-width="1" fill="none"/></svg>
<svg style="position:absolute;left:636px;top:387px" width="27" height="27" viewBox="0 0 27 27"><defs><linearGradient id="g9" x1="0" y1="0" x2="0" y2="1"><stop offset="0" stop-color="#6ab4f0"/><stop offset="1" stop-color="#2a78d4"/></linearGradient></defs>
<rect x="0.5" y="0.5" width="26" height="26" rx="3" fill="url(#g9)" stroke="#2a6ab8"/>
<g fill="none" stroke="#fff" stroke-width="2.2" stroke-linecap="round">
<path d="M4.5,11 Q13.5,3 22.5,11"/><path d="M7.5,14.5 Q13.5,9 19.5,14.5"/><path d="M10.5,18 Q13.5,15.5 16.5,18"/></g>
<path d="M11.5,20 L15.5,20 L13.5,22.5Z" fill="#fff"/></svg>
<svg style="position:absolute;left:734px;top:385px" width="31" height="30" viewBox="0 0 31 30"><path d="M8.5,0.5 L19,0.5 L23.5,5 L23.5,12 L8.5,12Z" fill="#f2f2f2" stroke="#999"/>
<path d="M19,0.5 L19,5 L23.5,5" fill="#ddd" stroke="#999"/>
<rect x="1" y="11" width="29" height="14" rx="3.5" fill="#d8d8d8" stroke="#777"/>
<rect x="3" y="12" width="25" height="3" fill="#eee"/>
<rect x="5" y="15" width="21" height="5" fill="#3a3a3a"/>
<rect x="6.5" y="22" width="18" height="7" fill="#f6f6f6" stroke="#999"/></svg>
<svg style="position:absolute;left:836px;top:388px" width="27" height="27" viewBox="0 0 27 27"><defs><linearGradient id="g10" x1="0" y1="0" x2="0" y2="1"><stop offset="0" stop-color="#f48a48"/><stop offset="1" stop-color="#d85a20"/></linearGradient></defs>
<rect x="0.5" y="0.5" width="26" height="26" rx="3" fill="url(#g10)" stroke="#c05018"/>
<path d="M13.5,3.5 L16.3,7.2 L20.6,6.4 L19.8,10.7 L23.5,13.5 L19.8,16.3 L20.6,20.6 L16.3,19.8 L13.5,23.5 L10.7,19.8 L6.4,20.6 L7.2,16.3 L3.5,13.5 L7.2,10.7 L6.4,6.4 L10.7,7.2Z" fill="#fff"/>
<path d="M13.5,7.5 L17.5,12.5 L15.2,12.5 L15.2,18 L11.8,18 L11.8,12.5 L9.5,12.5Z" fill="#e4642a"/></svg>
<svg style="position:absolute;left:933px;top:384px" width="31" height="29" viewBox="0 0 31 29"><defs><linearGradient id="g11" x1="0" y1="0" x2="0" y2="1"><stop offset="0" stop-color="#e8e8e8"/><stop offset="1" stop-color="#c0c0c0"/></linearGradient></defs>
<path d="M3,15 L28,15 L30.5,24 L0.5,24 Z" fill="url(#g11)" stroke="#999" stroke-width="0.8"/>
<rect x="0.5" y="24" width="30" height="4.5" fill="#555"/><rect x="3" y="25" width="5" height="2" fill="#222"/>
<circle cx="11" cy="11" r="6.2" fill="none" stroke="#e06a3a" stroke-width="2.6"/>
<circle cx="3" cy="10" r="2.4" fill="#e06a3a"/><circle cx="15.5" cy="3.5" r="2.4" fill="#e06a3a"/><circle cx="15.5" cy="18" r="2.4" fill="#e06a3a"/>
<path d="M14,6 Q23,5 24,13 L27,12 L22.5,18 L18,12.5 L21,13 Q20,8.5 14,9Z" fill="#9ccc58" stroke="#7aa840" stroke-width="0.5"/></svg>
<svg style="position:absolute;left:1036px;top:388px" width="26" height="26" viewBox="0 0 26 26"><defs><linearGradient id="g12" x1="0" y1="0" x2="0" y2="1"><stop offset="0" stop-color="#5ca8ec"/><stop offset="1" stop-color="#2a78d0"/></linearGradient></defs>
<rect x="0.5" y="0.5" width="25" height="25" rx="3" fill="url(#g12)" stroke="#2a68b0"/>
<path d="M10,6.5 L16,6.5 L16,12 L20,12 L13,19 L6,12 L10,12 Z" fill="#fff"/></svg>
<svg style="position:absolute;left:333px;top:485px" width="32" height="30" viewBox="0 0 32 30"><rect x="7.5" y="2.5" width="23" height="23" rx="1.5" fill="#f4f4f4" stroke="#aaa"/>
<rect x="7.5" y="2.5" width="23" height="7" rx="1.5" fill="#e05a50"/><rect x="7.5" y="7" width="23" height="2.5" fill="#e05a50"/>
<circle cx="11" cy="2" r="1" fill="#999"/><circle cx="27" cy="2" r="1" fill="#999"/>
<text x="20" y="22" font-family="Liberation Sans" font-weight="bold" font-size="13" text-anchor="middle" fill="#3a3a3a">28</text>
<circle cx="8.5" cy="21.5" r="7" fill="#f0f0f0" stroke="#2a2a2a" stroke-width="2"/>
<path d="M5,20.5 L8.5,23 L12.5,18.5" stroke="#c03030" fill="none" stroke-width="1"/></svg>
<svg style="position:absolute;left:434px;top:486px" width="30" height="28" viewBox="0 0 30 28"><defs><linearGradient id="g13" x1="0" y1="0" x2="0" y2="1"><stop offset="0" stop-color="#e4e4e4"/><stop offset="1" stop-color="#c4c4c4"/></linearGradient></defs>
<g fill="url(#g13)" stroke="#b4b4b4" stroke-width="0.8">
<ellipse cx="8.5" cy="9" rx="3.3" ry="4.6"/><path d="M0.5,24.5 Q0.5,15.5 8.5,15.5 Q13,15.5 14,20 L14,24.5Z"/>
<ellipse cx="19" cy="7.5" rx="4.6" ry="6.3"/><path d="M8.5,27 Q8.5,15.5 19,15.5 Q29.5,15.5 29.5,27Z"/></g></svg>
<div style="position:absolute;left:301px;top:190px;width:97px;height:45px;background:#308cc6"></div>
<div style="position:absolute;left:299.7px;top:191.1px;width:100px;text-align:center;font-size:12.7px;letter-spacing:0.4px;line-height:14.7px;color:#e4f4ff;white-space:nowrap">Configurazione<br>dell'aspetto di<br>LXQt</div>
<div style="position:absolute;left:399.2px;top:197.0px;width:100px;text-align:center;font-size:12.7px;letter-spacing:0.4px;line-height:15px;color:#1a1a1a;white-space:nowrap">Configurazione<br>delle<br>scorciatoie di&hellip;</div>
<div style="position:absolute;left:499.2px;top:187.0px;width:100px;text-align:center;font-size:12.7px;letter-spacing:0.4px;line-height:15px;color:#1a1a1a;white-space:nowrap">Desktop</div>
<div style="position:absolute;left:598.2px;top:197.89999999999998px;width:100px;text-align:center;font-size:12.7px;letter-spacing:0.4px;line-height:15px;color:#1a1a1a;white-space:nowrap">Esci dal siste&hellip;</div>
<div style="position:absolute;left:698.2px;top:195.2px;width:100px;text-align:center;font-size:12.7px;letter-spacing:0.4px;line-height:15px;color:#1a1a1a;white-space:nowrap">File Associati&hellip;</div>
<div style="position:absolute;left:799.2px;top:194.0px;width:100px;text-align:center;font-size:12.7px;letter-spacing:0.4px;line-height:15px;color:#1a1a1a;white-space:nowrap">Keyboard and<br>Mouse</div>
<div style="position:absolute;left:897.2px;top:195.2px;width:100px;text-align:center;font-size:12.7px;letter-spacing:0.4px;line-height:15px;color:#1a1a1a;white-space:nowrap">Monitor setti&hellip;</div>
<div style="position:absolute;left:999.2px;top:186.6px;width:100px;text-align:center;font-size:12.7px;letter-spacing:0.4px;line-height:15px;color:#1a1a1a;white-space:nowrap">Openbox<br>Settings</div>
<div style="position:absolute;left:299.2px;top:286.3px;width:100px;text-align:center;font-size:12.7px;letter-spacing:0.4px;line-height:15px;color:#1a1a1a;white-space:nowrap">Power<br>Management</div>
<div style="position:absolute;left:399.2px;top:287.2px;width:100px;text-align:center;font-size:12.7px;letter-spacing:0.4px;line-height:15px;color:#1a1a1a;white-space:nowrap">Screens</div>
<div style="position:absolute;left:499.2px;top:288.8px;width:100px;text-align:center;font-size:12.7px;letter-spacing:0.4px;line-height:15px;color:#1a1a1a;white-space:nowrap">Strumento di<br>configurazione<br>della sessione<br>di LxQt</div>
<div style="position:absolute;left:299.2px;top:425.8px;width:100px;text-align:center;font-size:12.7px;letter-spacing:0.4px;line-height:15px;color:#1a1a1a;white-space:nowrap">Users and<br>Groups</div>
<div style="position:absolute;left:399.2px;top:434.0px;width:100px;text-align:center;font-size:12.7px;letter-spacing:0.4px;line-height:15px;color:#1a1a1a;white-space:nowrap">Date and Time</div>
<div style="position:absolute;left:499.2px;top:422.2px;width:100px;text-align:center;font-size:12.7px;letter-spacing:0.4px;line-height:15px;color:#1a1a1a;white-space:nowrap">Lubuntu<br>Software Cen&hellip;</div>
<div style="position:absolute;left:599.2px;top:419.2px;width:100px;text-align:center;font-size:12.7px;letter-spacing:0.4px;line-height:15px;color:#1a1a1a;white-space:nowrap">Network</div>
<div style="position:absolute;left:699.2px;top:415.2px;width:100px;text-align:center;font-size:12.7px;letter-spacing:0.4px;line-height:15px;color:#1a1a1a;white-space:nowrap;height:9.800000000000011px;overflow:hidden">Printers</div>
<div style="position:absolute;left:799.2px;top:419.09999999999997px;width:100px;text-align:center;font-size:12.7px;letter-spacing:0.4px;line-height:15px;color:#1a1a1a;white-space:nowrap">Software<br>Updater</div>
<div style="position:absolute;left:899.2px;top:425.4px;width:100px;text-align:center;font-size:12.7px;letter-spacing:0.4px;line-height:15px;color:#1a1a1a;white-space:nowrap">Startup Disk<br>Creator</div>
<div style="position:absolute;left:999.2px;top:418.59999999999997px;width:100px;text-align:center;font-size:12.7px;letter-spacing:0.4px;line-height:15px;color:#1a1a1a;white-space:nowrap">Synaptic<br>Package<br>Manager</div>
<div style="position:absolute;left:299.2px;top:529.9000000000001px;width:100px;text-align:center;font-size:12.7px;letter-spacing:0.4px;line-height:15px;color:#1a1a1a;white-space:nowrap">Time and Date</div>
<div style="position:absolute;left:399.2px;top:525.8000000000001px;width:100px;text-align:center;font-size:12.7px;letter-spacing:0.4px;line-height:15px;color:#1a1a1a;white-space:nowrap;height:19.199999999999932px;overflow:hidden">Users and<br>Groups</div>
<div style="position:absolute;left:292px;top:545px;width:918px;height:46px;background:#edeae6;border-left:1px solid #fff;box-sizing:border-box"></div>
<div style="position:absolute;left:1125px;top:556px;width:80px;height:22px;box-sizing:border-box;border:1px solid #aaa7a2;border-radius:3px;background:linear-gradient(#fbfbfa,#ebe9e6);text-align:center;font-size:12.7px;letter-spacing:0.4px;line-height:20px;color:#1a1a1a">Close</div>
<div style="position:absolute;left:292px;top:591px;width:918px;height:1px;background:#4a4642"></div>
<div style="position:absolute;left:292px;top:592px;width:918px;height:3px;background:linear-gradient(#fff,#e4e4e4)"></div>
<div style="position:absolute;left:317px;top:591px;width:1px;height:4px;background:#4a4642"></div>
<div style="position:absolute;left:1184px;top:591px;width:1px;height:4px;background:#4a4642"></div>
<div style="position:absolute;left:2px;top:541px;width:235px;height:234px;background:#fff;border:1px solid #a8a8a8;box-sizing:border-box"></div>
<div style="position:absolute;left:3px;top:729px;width:233px;height:22px;background:#308cc6"></div>
<div style="position:absolute;left:7px;top:702px;width:226px;height:1px;background:#c8c8c8"></div>
<div style="position:absolute;left:7px;top:728px;width:226px;height:1px;background:#c8c8c8"></div>
<div style="position:absolute;left:29px;top:546.2px;font-size:12.7px;letter-spacing:0.4px;line-height:15px;color:#1a1a1a;white-space:nowrap;">Accessori</div>
<svg style="position:absolute;left:8px;top:545px" width="16" height="16" viewBox="0 0 16 16"><path d="M0.5,4 L0.5,15.5 L15.5,15.5Z" fill="#8ed860" stroke="#4a9a30"/><path d="M3,9 L3,13 L8,13Z" fill="#fff"/>
<circle cx="4" cy="2.5" r="2" fill="none" stroke="#3a5a9a" stroke-width="1.4"/><circle cx="12" cy="2.5" r="2" fill="none" stroke="#3a5a9a" stroke-width="1.4"/>
<path d="M5,4 L13,12 M11,4 L4,11" stroke="#888" stroke-width="1.6"/><path d="M5,4 L13,12 M11,4 L4,11" stroke="#eee" stroke-width="0.7"/></svg>
<svg style="position:absolute;left:227px;top:548px" width="6" height="10" viewBox="0 0 6 10"><path d="M0,0 L5,5 L0,10Z" fill="#4a4a4a"/></svg>
<div style="position:absolute;left:29px;top:569.2px;font-size:12.7px;letter-spacing:0.4px;line-height:15px;color:#1a1a1a;white-space:nowrap;">Altro</div>
<svg style="position:absolute;left:8px;top:568px" width="16" height="16" viewBox="0 0 16 16"><rect x="6" y="0.5" width="2" height="8" fill="#e0c050"/><path d="M10,1 L12,1 L12,8 L10,8Z" fill="#ccc" stroke="#888" stroke-width="0.5"/><rect x="3" y="2" width="2" height="6" fill="#d4b040"/>
<rect x="1.5" y="7.5" width="13" height="8" rx="1" fill="#c8b08a" stroke="#a08860" stroke-width="0.8"/><rect x="2" y="8" width="12" height="2" fill="#dcc8a0"/></svg>
<svg style="position:absolute;left:227px;top:571px" width="6" height="10" viewBox="0 0 6 10"><path d="M0,0 L5,5 L0,10Z" fill="#4a4a4a"/></svg>
<div style="position:absolute;left:29px;top:592.2px;font-size:12.7px;letter-spacing:0.4px;line-height:15px;color:#1a1a1a;white-space:nowrap;">Audio e Video</div>
<svg style="position:absolute;left:8px;top:591px" width="16" height="16" viewBox="0 0 16 16"><rect x="1" y="1" width="8" height="12" fill="#6a7a88" stroke="#3a4650" stroke-width="0.8"/><rect x="2.5" y="3" width="5" height="3" fill="#8aa4b8"/><rect x="2.5" y="7.5" width="5" height="3" fill="#8aa4b8"/>
<path d="M9,3 L15,2 L15,12" fill="none" stroke="#4a4a4a" stroke-width="1.8"/><ellipse cx="7.5" cy="13.5" rx="2.5" ry="2" fill="#4a4a4a"/><ellipse cx="13" cy="12.5" rx="2.5" ry="2" fill="#4a4a4a"/></svg>
<svg style="position:absolute;left:227px;top:594px" width="6" height="10" viewBox="0 0 6 10"><path d="M0,0 L5,5 L0,10Z" fill="#4a4a4a"/></svg>
<div style="position:absolute;left:29px;top:615.2px;font-size:12.7px;letter-spacing:0.4px;line-height:15px;color:#1a1a1a;white-space:nowrap;">Grafica</div>
<svg style="position:absolute;left:8px;top:614px" width="16" height="16" viewBox="0 0 16 16"><ellipse cx="9" cy="8.5" rx="6.8" ry="6.5" fill="#f4dca0" stroke="#c08830" stroke-width="1"/><circle cx="7" cy="5" r="1.8" fill="#fff" stroke="#c08830" stroke-width="0.6"/>
<circle cx="12" cy="6" r="1.3" fill="#c04020"/><circle cx="12.5" cy="10" r="1.3" fill="#3a8a30"/><circle cx="9" cy="12.5" r="1.3" fill="#e08020"/>
<path d="M14,1 L3,12" stroke="#8a5a20" stroke-width="1.6"/><path d="M3.5,11.5 Q0.5,13 0.5,15.5 Q3,15 4.5,12.5Z" fill="#222"/></svg>
<svg style="position:absolute;left:227px;top:617px" width="6" height="10" viewBox="0 0 6 10"><path d="M0,0 L5,5 L0,10Z" fill="#4a4a4a"/></svg>
<div style="position:absolute;left:29px;top:638.2px;font-size:12.7px;letter-spacing:0.4px;line-height:15px;color:#1a1a1a;white-space:nowrap;">Internet</div>
<svg style="position:absolute;left:8px;top:637px" width="16" height="16" viewBox="0 0 16 16"><defs><radialGradient id="glb" cx="0.35" cy="0.3" r="0.8"><stop offset="0" stop-color="#6aa8e8"/><stop offset="1" stop-color="#143a78"/></radialGradient></defs>
<circle cx="8" cy="8" r="7.6" fill="url(#glb)"/><path d="M4,4 Q7,3 8,6 Q6,9 4,8Z M9,9 Q12,8 13,11 Q11,14 9,12Z" fill="#4a8ac8" fill-opacity="0.7"/></svg>
<svg style="position:absolute;left:227px;top:640px" width="6" height="10" viewBox="0 0 6 10"><path d="M0,0 L5,5 L0,10Z" fill="#4a4a4a"/></svg>
<div style="position:absolute;left:29px;top:661.2px;font-size:12.7px;letter-spacing:0.4px;line-height:15px;color:#1a1a1a;white-space:nowrap;">Strumenti di sistema</div>
<svg style="position:absolute;left:8px;top:660px" width="16" height="16" viewBox="0 0 16 16"><path d="M6.49,2.19 L6.65,0.42 L9.35,0.42 L9.51,2.19 L11.03,2.82 L12.40,1.68 L14.32,3.60 L13.18,4.97 L13.81,6.49 L15.58,6.65 L15.58,9.35 L13.81,9.51 L13.18,11.03 L14.32,12.40 L12.40,14.32 L11.03,13.18 L9.51,13.81 L9.35,15.58 L6.65,15.58 L6.49,13.81 L4.97,13.18 L3.60,14.32 L1.68,12.40 L2.82,11.03 L2.19,9.51 L0.42,9.35 L0.42,6.65 L2.19,6.49 L2.82,4.97 L1.68,3.60 L3.60,1.68 L4.97,2.82Z" fill="#e0e0e0" stroke="#aaa" stroke-width="0.8"/><circle cx="8" cy="8" r="2.4" fill="#fff" stroke="#aaa" stroke-width="0.8"/></svg>
<svg style="position:absolute;left:227px;top:663px" width="6" height="10" viewBox="0 0 6 10"><path d="M0,0 L5,5 L0,10Z" fill="#4a4a4a"/></svg>
<div style="position:absolute;left:29px;top:684.2px;font-size:12.7px;letter-spacing:0.4px;line-height:15px;color:#1a1a1a;white-space:nowrap;">Ufficio</div>
<svg style="position:absolute;left:8px;top:683px" width="16" height="16" viewBox="0 0 16 16"><path d="M3,7 L13,7 L12,15.5 L4,15.5Z" fill="#f0f0f0" stroke="#666" stroke-width="0.9"/><ellipse cx="9" cy="11.5" rx="1.8" ry="1.5" fill="#a8a8e0"/>
<path d="M1,1 L8,9" stroke="#666" stroke-width="2.2"/><path d="M1,1 L8,9" stroke="#ddd" stroke-width="1"/><path d="M14,1 L8,9" stroke="#a08030" stroke-width="2"/><path d="M14,1 L8,9" stroke="#e8c860" stroke-width="0.9"/></svg>
<svg style="position:absolute;left:227px;top:686px" width="6" height="10" viewBox="0 0 6 10"><path d="M0,0 L5,5 L0,10Z" fill="#4a4a4a"/></svg>
<div style="position:absolute;left:29px;top:708.7px;font-size:12.7px;letter-spacing:0.4px;line-height:15px;color:#1a1a1a;white-space:nowrap;">Preferenze</div>
<svg style="position:absolute;left:8px;top:708px" width="16" height="16" viewBox="0 0 16 16"><rect x="0.5" y="0.5" width="15" height="15" rx="1" fill="#ececec" stroke="#999"/>
<path d="M3.5,3.5 L12.5,12.5 M12.5,3.5 L3.5,12.5" stroke="#555" stroke-width="2.2"/></svg>
<svg style="position:absolute;left:227px;top:710px" width="6" height="10" viewBox="0 0 6 10"><path d="M0,0 L5,5 L0,10Z" fill="#4a4a4a"/></svg>
<div style="position:absolute;left:29px;top:733.7px;font-size:12.7px;letter-spacing:0.4px;line-height:15px;color:#e4f4ff;white-space:nowrap;">Esci</div>
<svg style="position:absolute;left:8px;top:733px" width="16" height="16" viewBox="0 0 16 16"><defs><linearGradient id="pw" x1="0" y1="0" x2="0" y2="1"><stop offset="0" stop-color="#f07070"/><stop offset="1" stop-color="#b01830"/></linearGradient></defs>
<rect x="0.5" y="0.5" width="15" height="15" rx="2" fill="url(#pw)" stroke="#901020" stroke-width="0.8"/>
<path d="M5.2,4.8 A4.2,4.2 0 1 0 10.8,4.8" fill="none" stroke="#fff" stroke-width="1.5"/><line x1="8" y1="2.8" x2="8" y2="8" stroke="#fff" stroke-width="1.5"/></svg>
<svg style="position:absolute;left:227px;top:735px" width="6" height="10" viewBox="0 0 6 10"><path d="M0,0 L5,5 L0,10Z" fill="#fff"/></svg>
<div style="position:absolute;left:29px;top:757.0px;font-size:12.7px;letter-spacing:0.4px;line-height:15px;color:#1a1a1a;white-space:nowrap;">Blocca schermo</div>
<svg style="position:absolute;left:8px;top:756px" width="16" height="16" viewBox="0 0 16 16"><rect x="1" y="1" width="14" height="11" fill="#eee" stroke="#111" stroke-width="1.3"/>
<rect x="5.5" y="6" width="5" height="4.5" fill="#aaa"/><path d="M6.2,6 L6.2,4.5 Q8,2.5 9.8,4.5 L9.8,6" fill="none" stroke="#aaa" stroke-width="1"/>
<rect x="5" y="12.5" width="6" height="2.5" fill="#ccc"/></svg>
<div style="position:absolute;left:237px;top:684px;width:171px;height:91px;background:#fff;border:1px solid #a8a8a8;box-sizing:border-box"></div>
<div style="position:absolute;left:263px;top:689.2px;font-size:12.7px;letter-spacing:0.4px;line-height:15px;color:#1a1a1a;white-space:nowrap;">Sospensione</div>
<svg style="position:absolute;left:242px;top:688px" width="16" height="16" viewBox="0 0 16 16"><defs><linearGradient id="clk" x1="0" y1="0" x2="0" y2="1"><stop offset="0" stop-color="#f8f8f8"/><stop offset="1" stop-color="#d8d4d0"/></linearGradient></defs>
<circle cx="8" cy="8" r="7" fill="url(#clk)" stroke="#2a2a2a" stroke-width="1.4"/><path d="M4,7.2 L8,8.6 L11.8,4.4" fill="none" stroke="#444" stroke-width="0.9"/><circle cx="8" cy="8.5" r="0.8" fill="#a03030"/></svg>
<div style="position:absolute;left:263px;top:712.2px;font-size:12.7px;letter-spacing:0.4px;line-height:15px;color:#1a1a1a;white-space:nowrap;">Riavvia</div>
<svg style="position:absolute;left:242px;top:711px" width="16" height="16" viewBox="0 0 16 16"><path d="M12.5,5.5 A5.6,5.6 0 1 0 13,10.5" fill="none" stroke="#80aede" stroke-width="4"/><path d="M9.5,1.5 L15.5,0.8 L15,7.5Z" fill="#80aede"/></svg>
<div style="position:absolute;left:263px;top:734.9000000000001px;font-size:12.7px;letter-spacing:0.4px;line-height:15px;color:#1a1a1a;white-space:nowrap;">Spegni</div>
<svg style="position:absolute;left:242px;top:734px" width="16" height="16" viewBox="0 0 16 16"><defs><linearGradient id="pw" x1="0" y1="0" x2="0" y2="1"><stop offset="0" stop-color="#f07070"/><stop offset="1" stop-color="#b01830"/></linearGradient></defs>
<rect x="0.5" y="0.5" width="15" height="15" rx="2" fill="url(#pw)" stroke="#901020" stroke-width="0.8"/>
<path d="M5.2,4.8 A4.2,4.2 0 1 0 10.8,4.8" fill="none" stroke="#fff" stroke-width="1.5"/><line x1="8" y1="2.8" x2="8" y2="8" stroke="#fff" stroke-width="1.5"/></svg>
<div style="position:absolute;left:263px;top:757.8000000000001px;font-size:12.7px;letter-spacing:0.4px;line-height:15px;color:#1a1a1a;white-space:nowrap;">Esci</div>
<svg style="position:absolute;left:242px;top:757px" width="16" height="16" viewBox="0 0 16 16"><circle cx="6" cy="4.5" r="3.2" fill="#e4e4e4" stroke="#aaa" stroke-width="0.7"/><path d="M0.5,15 Q0.5,9 6,9 Q10,9 11,12 L11,15Z" fill="#d8d0c0" stroke="#aaa" stroke-width="0.6"/>
<path d="M7,10 L11,10 L11,8 L15.5,12 L11,15.5 L11,13.5 L7,13.5Z" fill="#f0b030" stroke="#c08010" stroke-width="0.6"/></svg>
<div style="position:absolute;left:0px;top:775px;width:1280px;height:30px;background:linear-gradient(#eeedeb,#d8d8d8 90%,#c8c8c8);border-top:1px solid #e2ecf0;box-sizing:border-box"></div>
<svg style="position:absolute;left:4px;top:777px" width="27" height="27" viewBox="0 0 27 27"><defs><linearGradient id="sb" x1="0" y1="0" x2="1" y2="1"><stop offset="0" stop-color="#0c5070"/><stop offset="1" stop-color="#0e6aa0"/></linearGradient></defs>
<rect x="0" y="0" width="27" height="27" rx="2.5" fill="url(#sb)"/>
<circle cx="9.3" cy="9" r="6.6" fill="#fff"/><path d="M12,13 L21,22.5" stroke="#fff" stroke-width="3.6" stroke-linecap="round"/>
<path d="M8.5,7.5 L14,13" stroke="#0c5070" stroke-width="2.4" stroke-linecap="round"/><path d="M11.5,17 L18,10.5" stroke="#fff" stroke-width="0.8"/></svg>
<div style="position:absolute;left:38px;top:777px;width:21px;height:27px;box-sizing:border-box;border:1px solid #a8b0b8;border-radius:3px;background:linear-gradient(#f8f9fa,#e6e8ea);text-align:center;font-size:12.7px;line-height:26.5px;color:#505050">1</div>
<div style="position:absolute;left:61px;top:777px;width:21px;height:27px;box-sizing:border-box;border:1px solid #c4c4c4;border-radius:3px;background:linear-gradient(#e2e2e2,#d2d2d2);text-align:center;font-size:12.7px;line-height:26.5px;color:#505050">2</div>
<div style="position:absolute;left:84px;top:777px;width:21px;height:27px;box-sizing:border-box;border:1px solid #c4c4c4;border-radius:3px;background:linear-gradient(#e2e2e2,#d2d2d2);text-align:center;font-size:12.7px;line-height:26.5px;color:#505050">3</div>
<div style="position:absolute;left:107px;top:777px;width:21px;height:27px;box-sizing:border-box;border:1px solid #c4c4c4;border-radius:3px;background:linear-gradient(#e2e2e2,#d2d2d2);text-align:center;font-size:12.7px;line-height:26.5px;color:#505050">4</div>
<div style="position:absolute;left:122px;top:775px;width:120px;text-align:center;font-size:12.7px;letter-spacing:0.4px;line-height:13.7px;color:#555;padding-top:1.8px">Drop application<br>icons here</div>
<div style="position:absolute;left:238px;top:780px;width:397px;height:21px;box-sizing:border-box;border:1px solid #9a9a9a;border-radius:3px;background:#f8f8f8"></div>
<svg style="position:absolute;left:243px;top:782px" width="18" height="17" viewBox="0 0 18 17"><defs><linearGradient id="wi243" x1="0" y1="0" x2="0" y2="1"><stop offset="0" stop-color="#f0f4fa"/><stop offset="1" stop-color="#c8d0dc"/></linearGradient></defs>
<rect x="0.5" y="0.5" width="17" height="16" fill="url(#wi243)" stroke="#3a5488"/><rect x="0" y="0" width="18" height="4" fill="#3a5a90"/></svg>
<div style="position:absolute;left:265px;top:783.6px;font-size:12.7px;letter-spacing:0.4px;line-height:15px;color:#1a1a1a;white-space:nowrap;">Centro di configurazione</div>
<div style="position:absolute;left:1240px;top:782.1999999999999px;font-size:12.8px;letter-spacing:1px;line-height:16px;color:#555;white-space:nowrap">21:55</div>
<svg style="position:absolute;left:1179px;top:779px" width="18" height="23" viewBox="0 0 18 23"><path d="M4,5 Q9,-1 14,5Z" fill="#f0f0f0" stroke="#888" stroke-width="0.8"/><rect x="3" y="5" width="12" height="1.2" fill="#333"/>
<rect x="1" y="6.5" width="16" height="11" rx="2" fill="#3a7ac0" stroke="#1a3a60"/><rect x="2.5" y="8" width="13" height="4" fill="#7ab0e0"/>
<path d="M4,12 L14,12 M11,10 L14,12 L11,14" stroke="#fff" stroke-width="1" fill="none"/>
<ellipse cx="9" cy="20.5" rx="4" ry="1.6" fill="#eee" stroke="#999" stroke-width="0.8"/></svg>
<svg style="position:absolute;left:1211px;top:780px" width="19" height="19" viewBox="0 0 19 19"><path d="M1,7 L5,7 L9.5,2 L9.5,17 L5,12 L1,12Z" fill="#e0e0e0" stroke="#444" stroke-width="1"/>
<rect x="7.5" y="1" width="2.5" height="17" rx="1" fill="#555"/>
<path d="M12.5,6.5 Q14,9.5 12.5,12.5" stroke="#aaa" stroke-width="1.2" fill="none"/><path d="M15,4 Q18,9.5 15,15" stroke="#777" stroke-width="1.2" fill="none"/></svg>
</div></body></html>
